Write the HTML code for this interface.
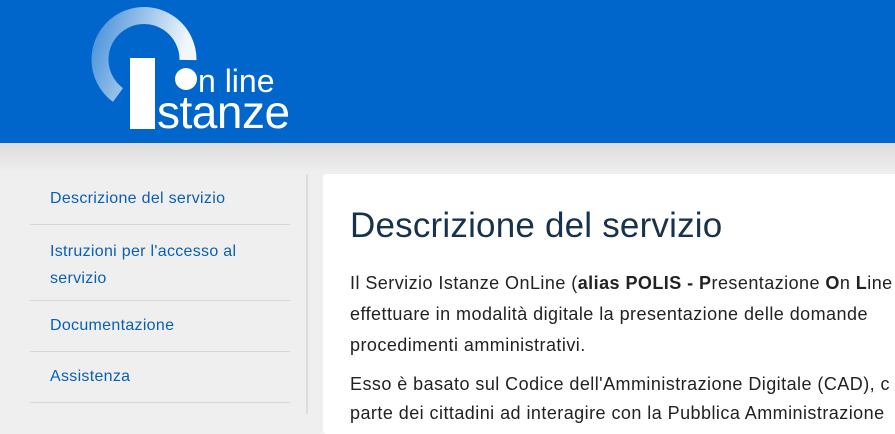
<!DOCTYPE html>
<html><head><meta charset="utf-8"><style>
body{margin:0;width:895px;height:412px;overflow:hidden;background:#efefef;font-family:"Liberation Sans",sans-serif;position:relative}
.hdr{position:absolute;left:0;top:0;width:895px;height:143px;background:#0066cc}
.shadow{position:absolute;left:0;top:143px;width:895px;height:30px;background:linear-gradient(#dcdcdc,#efefef)}
.side{position:absolute;left:30px;top:174px;width:260px}
.side a{display:block;color:#0a5fb4;font-size:16px;text-decoration:none;border-bottom:1px solid #d6d6d6;letter-spacing:0.3px;box-sizing:border-box}
.vline{position:absolute;left:306px;top:174px;width:2px;height:240px;background:#dcdcdc}
.card{position:absolute;left:323px;top:174px;width:600px;height:260px;background:#fff;border-radius:4px}
h1{position:absolute;left:350px;top:206px;margin:0;font-size:35px;font-weight:normal;color:#17324d;letter-spacing:0.2px;white-space:nowrap}
.p{position:absolute;left:350px;color:#222;font-size:18px;white-space:nowrap;letter-spacing:0.45px}
</style></head><body>
<div class="hdr">
<svg width="320" height="143" style="position:absolute;left:0;top:0">
<defs><linearGradient id="g" x1="0" y1="0" x2="1" y2="0.3"><stop offset="0" stop-color="#fff" stop-opacity="0.3"/><stop offset="1" stop-color="#fff" stop-opacity="0.95"/></linearGradient></defs>
<path d="M188 60 A44 44 0 1 0 118 95" fill="none" stroke="url(#g)" stroke-width="17"/>
<rect x="130" y="58" width="25" height="71" fill="#fff"/>
<circle cx="186" cy="79" r="11" fill="#fff"/>
<text x="198" y="92" fill="#fff" font-size="32" font-family="Liberation Sans">n line</text>
<text x="157" y="128" fill="#fff" font-size="46" font-family="Liberation Sans" letter-spacing="-0.5">stanze</text>
</svg>
</div>
<div class="shadow"></div>
<div class="side">
<a style="height:51px;padding:15px 0 0 20px;line-height:20px">Descrizione del servizio</a>
<a style="height:76px;padding:13px 40px 0 20px;line-height:27px">Istruzioni per l'accesso al servizio</a>
<a style="height:51px;padding:15px 0 0 20px;line-height:20px">Documentazione</a>
<a style="height:51px;padding:15px 0 0 20px;line-height:20px">Assistenza</a>
</div>
<div class="vline"></div>
<div class="card"></div>
<h1>Descrizione del servizio</h1>
<div class="p" style="top:273px">Il Servizio Istanze OnLine (<b>alias POLIS - P</b>resentazione <b>O</b>n <b>L</b>ine</div>
<div class="p" style="top:304px">effettuare in modalità digitale la presentazione delle domande</div>
<div class="p" style="top:335px">procedimenti amministrativi.</div>
<div class="p" style="top:374px">Esso è basato sul Codice dell'Amministrazione Digitale (CAD), c</div>
<div class="p" style="top:403px">parte dei cittadini ad interagire con la Pubblica Amministrazione</div>
</body></html>
